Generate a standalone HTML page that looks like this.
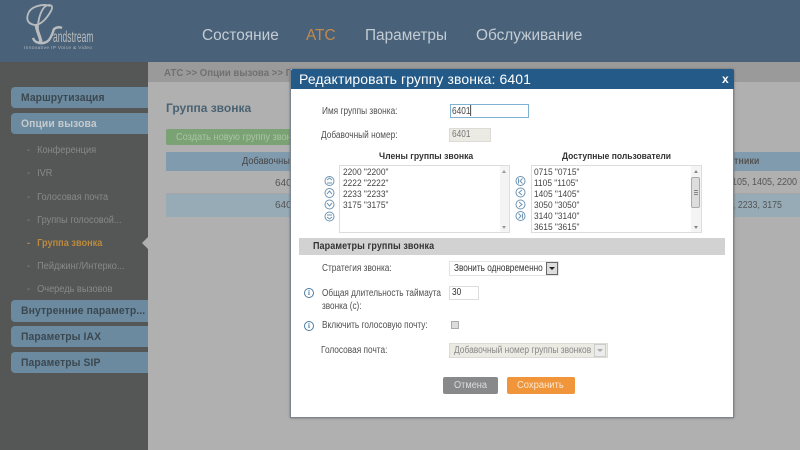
<!DOCTYPE html>
<html><head><meta charset="utf-8"><style>
*{box-sizing:border-box}
html,body{margin:0;padding:0;width:800px;height:450px;overflow:hidden;background:#b0b0b0;font-family:"Liberation Sans",sans-serif}
.a{position:absolute;white-space:nowrap}
.nav{font-size:15.4px;color:#c3ccd4;top:27px;line-height:18px}
.side{left:11px;width:137px;height:21px;background:#6b8a9f;border-radius:4px 0 0 4px;color:#3c4850;font-size:11px;font-weight:bold;line-height:23px;padding-left:10px}
.side b{display:inline-block;transform:scaleX(.94);transform-origin:0 0;font-weight:bold;letter-spacing:.1px}
.sub{left:27px;font-size:10px;color:#888;line-height:12px;transform:scaleX(.92);transform-origin:0 0}
.sub span{display:inline-block;width:11px}
.l{font-size:10px;color:#505050;line-height:12px;transform:scaleX(.83);transform-origin:0 0}
.list{font-size:9.5px;color:#444;line-height:11px;transform:scaleX(.88);transform-origin:0 0}
.info{position:absolute;left:304px;width:10px;height:10px;border:1.3px solid #4b7ba3;border-radius:50%;font:bold 7px/8px "Liberation Serif",serif;text-align:center;color:#4b7ba3}
</style></head><body>
<div class="a" style="left:0;top:0;width:800px;height:62px;background:#4a6279"></div>
<div class="a" style="left:0;top:62px;width:148px;height:388px;background:#555756"></div>
<div class="a" style="left:148px;top:62px;width:652px;height:388px;background:#b0b0b0"></div>
<div class="a" style="left:148px;top:62px;width:652px;height:20px;background:#9a9a9a"></div>

<!-- logo -->
<svg class="a" style="left:0;top:0" width="110" height="56" fill="none" stroke="#b9bcbe" stroke-width="1.8">
<path d="M50 6C42 3 30 7 28 14C26 20 28 24 35 25C41 25 47 18 51 11C53 7 52 5 49 5C43 5 39 15 38 25C37 33 41 38 40 41C38 44 34 41 33 38"/>
<path d="M33 38C35 44 44 45 49 40C52 36 53 32 54 29C57 27 60 27 62 28" stroke-width="2.4"/>
<path d="M36 24C37 32 40 36 41 42" stroke-width="3.2"/>
</svg>
<div class="a" style="left:53px;top:30px;font:16px/16px 'Liberation Sans',sans-serif;color:#b9bcbe;transform:scaleX(.53);transform-origin:0 0;letter-spacing:.1px">andstream</div>
<div class="a" style="left:24px;top:46px;font:4.8px/6px 'Liberation Sans',sans-serif;color:#b0b6bb;letter-spacing:.35px">Innovative IP Voice &amp; Video</div>

<div class="a nav" style="left:202px">Состояние</div>
<div class="a nav" style="left:306px;color:#c08a4e">АТС</div>
<div class="a nav" style="left:365px">Параметры</div>
<div class="a nav" style="left:476px">Обслуживание</div>

<!-- sidebar -->
<div class="a side" style="top:87px"><b>Маршрутизация</b></div>
<div class="a side" style="top:113px;color:#c4cacd"><b>Опции вызова</b></div>
<div class="a sub" style="top:145px"><span>-</span>Конференция</div>
<div class="a sub" style="top:168px"><span>-</span>IVR</div>
<div class="a sub" style="top:192px"><span>-</span>Голосовая почта</div>
<div class="a sub" style="top:215px"><span>-</span>Группы голосовой...</div>
<div class="a sub" style="top:238px;color:#bb8a3e;font-weight:bold"><span>-</span>Группа звонка</div>
<div class="a sub" style="top:261px"><span>-</span>Пейджинг/Интерко...</div>
<div class="a sub" style="top:284px"><span>-</span>Очередь вызовов</div>
<div class="a" style="left:142px;top:237px;border:6px solid transparent;border-left:0;border-right-color:#b0b0b0"></div>
<div class="a side" style="top:300px;height:22px"><b style="transform:scaleX(.945)">Внутренние параметр...</b></div>
<div class="a side" style="top:326px"><b>Параметры IAX</b></div>
<div class="a side" style="top:352px"><b>Параметры SIP</b></div>

<!-- content -->
<div class="a" style="left:164px;top:68px;font-size:10px;font-weight:bold;color:#707070;line-height:12px;transform:scaleX(.96);transform-origin:0 0">АТС &gt;&gt; Опции вызова &gt;&gt; Г</div>
<div class="a" style="left:166px;top:101px;font-size:12px;font-weight:bold;color:#4a6272;line-height:15px">Группа звонка</div>
<div class="a" style="left:166px;top:129px;width:130px;height:16px;background:#7ba274;border-radius:2px;overflow:hidden"><span class="a" style="left:10px;top:0;color:#a9c4a4;font-size:10px;line-height:17px;transform:scaleX(.92);transform-origin:0 0">Создать новую группу звонка</span></div>
<div class="a" style="left:166px;top:152px;width:634px;height:19px;background:#809bad"></div>
<div class="a" style="left:242px;top:156px;font-size:10px;color:#454545;line-height:12px;transform:scaleX(.92);transform-origin:0 0">Добавочный</div>
<div class="a" style="left:734px;top:156px;font-size:10px;font-weight:bold;color:#555;line-height:12px;transform:scaleX(.9);transform-origin:0 0">тники</div>
<div class="a" style="left:166px;top:171px;width:634px;height:23px;background:#b0b0b0;border-bottom:1px solid #a5a5a5"></div>
<div class="a" style="left:166px;top:194px;width:634px;height:23px;background:#97abb7"></div>
<div class="a" style="left:275px;top:178px;font-size:10px;color:#555;line-height:12px">640</div>
<div class="a" style="left:275px;top:200px;font-size:10px;color:#555;line-height:12px">640</div>
<div class="a" style="left:732px;top:177px;font-size:10px;color:#555;line-height:12px;transform:scaleX(.9);transform-origin:0 0">105, 1405, 2200</div>
<div class="a" style="left:733px;top:200px;font-size:10px;color:#555;line-height:12px;transform:scaleX(.88);transform-origin:0 0">, 2233, 3175</div>

<!-- dialog -->
<div class="a" style="left:290px;top:69px;width:444px;height:349px;background:#fff;border:1px solid #7b8690;border-top:0;box-shadow:0 0 2px #666"></div>
<div class="a" style="left:291px;top:69px;width:443px;height:20px;background:#235a88;border-radius:2px 2px 0 0"></div>
<div class="a" style="left:299px;top:70px;font-size:14px;line-height:18px;color:#fff;letter-spacing:.1px">Редактировать группу звонка: 6401</div>
<div class="a" style="left:722px;top:71px;font-size:12px;font-weight:bold;line-height:16px;color:#fff">x</div>

<div class="a l" style="left:322px;top:106px">Имя группы звонка:</div>
<div class="a" style="left:450px;top:104px;width:79px;height:14px;border:1px solid #7fb1d3"></div>
<div class="a l" style="left:451.500px;top:105px;color:#444">6401<span style="display:inline-block;width:1px;height:11px;background:#222;vertical-align:-2px"></span></div>
<div class="a l" style="left:321px;top:130px">Добавочный номер:</div>
<div class="a" style="left:449px;top:128px;width:42px;height:14px;background:#ebebe4;border:1px solid #dcdcd6"></div>
<div class="a l" style="left:451.500px;top:129px;color:#777">6401</div>

<div class="a" style="left:378.500px;top:151px;font-size:9.500px;font-weight:bold;color:#333;line-height:12px;transform:scaleX(.91);transform-origin:0 0">Члены группы звонка</div>
<div class="a" style="left:562px;top:151px;font-size:9.500px;font-weight:bold;color:#333;line-height:12px;transform:scaleX(.895);transform-origin:0 0">Доступные пользователи</div>

<!-- list 1 -->
<div class="a" style="left:339px;top:165px;width:171px;height:68px;border:1px solid #ddd"></div>
<div class="a" style="left:500px;top:166px;width:9px;height:66px;background:#f4f4f4"></div>
<div class="a" style="left:502px;top:170px;border:2.500px solid transparent;border-top:0;border-bottom:3px solid #999"></div>
<div class="a" style="left:502px;top:226px;border:2.500px solid transparent;border-bottom:0;border-top:3px solid #999"></div>
<div class="a list" style="left:343px;top:167px">2200 "2200"<br>2222 "2222"<br>2233 "2233"<br>3175 "3175"</div>
<!-- list 2 -->
<div class="a" style="left:531px;top:165px;width:171px;height:68px;border:1px solid #ddd"></div>
<div class="a" style="left:691px;top:166px;width:10px;height:66px;background:#f4f4f4"></div>
<div class="a" style="left:691px;top:177px;width:9px;height:31px;background:#ddd;border:1px solid #aaa;border-radius:2px"></div>
<div class="a" style="left:693.500px;top:190px;width:4px;height:5px;border-top:1px solid #888;border-bottom:1px solid #888"></div>
<div class="a" style="left:693.500px;top:192px;width:4px;height:1px;background:#888"></div>
<div class="a" style="left:694px;top:170px;border:2.500px solid transparent;border-top:0;border-bottom:3px solid #888"></div>
<div class="a" style="left:694px;top:226px;border:2.500px solid transparent;border-bottom:0;border-top:3px solid #888"></div>
<div class="a list" style="left:534px;top:167px">0715 "0715"<br>1105 "1105"<br>1405 "1405"<br>3050 "3050"<br>3140 "3140"<br>3615 "3615"</div>

<!-- arrow icons -->
<svg class="a" style="left:324px;top:175px" width="12" height="50" fill="none" stroke="#6d94b2" stroke-width="1">
<circle cx="5.500" cy="6" r="4.500"/><path d="M3 5l2.500-2 2.500 2M3 8h5"/>
<circle cx="5.500" cy="18" r="4.500"/><path d="M3 19l2.500-3 2.500 3"/>
<circle cx="5.500" cy="29.500" r="4.500"/><path d="M3 28l2.500 3 2.500-3"/>
<circle cx="5.500" cy="41.500" r="4.500"/><path d="M3 40h5M3 42l2.500 2 2.500-2"/>
</svg>
<svg class="a" style="left:515px;top:175px" width="12" height="50" fill="none" stroke="#6d94b2" stroke-width="1">
<circle cx="5.500" cy="6" r="4.500"/><path d="M7.500 3.500l-2.500 2.500 2.500 2.500M3.500 3.500v5"/>
<circle cx="5.500" cy="17.500" r="4.500"/><path d="M7 15l-3 2.500 3 2.500"/>
<circle cx="5.500" cy="29.500" r="4.500"/><path d="M4 27l3 2.500-3 2.500"/>
<circle cx="5.500" cy="41" r="4.500"/><path d="M3.500 38.500l2.500 2.500-2.500 2.500M7.500 38.500v5"/>
</svg>

<!-- params -->
<div class="a" style="left:299px;top:238px;width:426px;height:17px;background:#d2d2d2"></div>
<div class="a" style="left:313px;top:241px;font-size:10px;font-weight:bold;color:#333;line-height:12px;transform:scaleX(.9);transform-origin:0 0;letter-spacing:.1px">Параметры группы звонка</div>

<div class="a l" style="left:322px;top:263px">Стратегия звонка:</div>
<div class="a" style="left:449px;top:261px;width:110px;height:15px;border:1px solid #e4e4e4"></div>
<div class="a l" style="left:454px;top:263px;color:#333;transform:scaleX(.82)">Звонить одновременно</div>
<div class="a" style="left:546px;top:262px;width:12px;height:13px;background:#ddd;border:1px solid #666"></div>
<div class="a" style="left:549px;top:267px;border:3px solid transparent;border-bottom:0;border-top:3px solid #222"></div>

<div class="info" style="top:288px">i</div>
<div class="a l" style="left:322px;top:287px;line-height:13px;transform:scaleX(.82)">Общая длительность таймаута<br>звонка (с):</div>
<div class="a" style="left:449px;top:286px;width:30px;height:14px;border:1px solid #ddd"></div>
<div class="a l" style="left:451.500px;top:287px;color:#333">30</div>

<div class="info" style="top:321px">i</div>
<div class="a l" style="left:322px;top:320px">Включить голосовую почту:</div>
<div class="a" style="left:451px;top:321px;width:8px;height:8px;background:#ddd;border:1px solid #aaa"></div>

<div class="a l" style="left:321px;top:345px">Голосовая почта:</div>
<div class="a" style="left:449px;top:343px;width:159px;height:15px;background:#ebebe4;border:1px solid #dcdcd6"></div>
<div class="a l" style="left:454px;top:345px;color:#888;transform:scaleX(.84)">Добавочный номер группы звонков</div>
<div class="a" style="left:594px;top:344px;width:12px;height:13px;background:#ececec;border:1px solid #ccc"></div>
<div class="a" style="left:597px;top:349px;border:3px solid transparent;border-bottom:0;border-top:3px solid #aaa"></div>

<div class="a" style="left:443px;top:377px;width:55px;height:17px;background:#88898a;border-radius:2px"></div>
<div class="a" style="left:454px;top:379px;color:#dcdcdc;font-size:10px;line-height:14px;transform:scaleX(.92);transform-origin:0 0">Отмена</div>
<div class="a" style="left:507px;top:377px;width:68px;height:17px;background:#f0953a;border-radius:2px"></div>
<div class="a" style="left:517px;top:379px;color:#fbe8d4;font-size:10px;line-height:14px;transform:scaleX(.94);transform-origin:0 0">Сохранить</div>
</body></html>
